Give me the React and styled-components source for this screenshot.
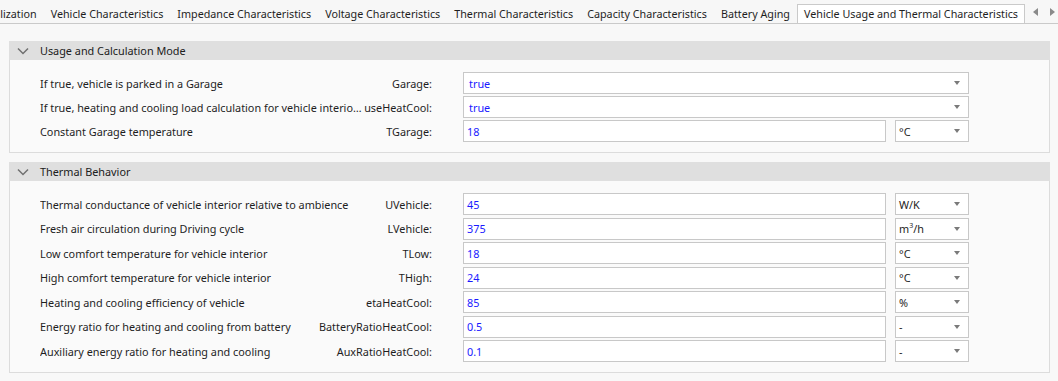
import React from 'react'
import styled, { createGlobalStyle } from 'styled-components'

const GlobalStyle = createGlobalStyle`
  body {
    margin: 0;
    background: #f8f8f8;
    font-family: 'Noto Sans', 'Open Sans', sans-serif;
    font-size: 10.85px;
    color: #1e1e1e;
  }
`

const Page = styled.div`
  width: 1058px;
  height: 381px;
  overflow: hidden;
  background: #f8f8f8;
`

const TabStrip = styled.div`
  display: flex;
  height: 24px;
  box-sizing: border-box;
  border-bottom: 1px solid #cacaca;
  background: #f7f7f7;
`

const TabList = styled.div`
  flex: 1;
  min-width: 0;
  display: flex;
  justify-content: flex-end;
  align-items: flex-end;
  overflow: hidden;
`

const Tab = styled.div`
  flex: none;
  height: 19px;
  box-sizing: border-box;
  padding: 0 7px;
  display: flex;
  align-items: center;
  white-space: nowrap;
  font-size: 10.75px;
  color: #1e1e1e;
  ${p =>
    p.$active &&
    `
    background: #ffffff;
    border: 1px solid #cacaca;
    border-bottom: none;
    margin-bottom: -1px;
    height: 20px;
    padding: 0 6px 1px;
  `}
`

const ScrollButtons = styled.div`
  flex: none;
  width: 33px;
  display: flex;
  align-items: center;
  justify-content: space-between;
  padding: 0 3px 0 8px;
  box-sizing: border-box;
`

const Arrow = styled.span`
  width: 0;
  height: 0;
  border-top: 4.5px solid transparent;
  border-bottom: 4.5px solid transparent;
  ${p =>
    p.$dir === 'left'
      ? 'border-right: 5px solid #8a8a8a;'
      : 'border-left: 5px solid #8a8a8a;'}
`

const Body = styled.div`
  padding: 17px 8px 0 9px;
  display: flex;
  flex-direction: column;
  gap: 9px;
`

const Section = styled.section`
  display: flex;
  flex-direction: column;
`

const SectionHeader = styled.div`
  height: 19px;
  background: #dfdfdf;
  display: flex;
  align-items: center;
  gap: 11px;
  padding-left: 8px;
  color: #202020;
`

const SectionContent = styled.div`
  background: #fafafa;
  border: 1px solid #dcdcdc;
  border-top: none;
  padding: 12px 0 10px 30px;
  display: flex;
  flex-direction: column;
  gap: ${p => p.$gap};
`

const Row = styled.div`
  display: flex;
  align-items: center;
  height: 22px;
`

const LeftCell = styled.div`
  width: 392px;
  display: flex;
  align-items: center;
  margin-right: 31px;
  flex: none;
`

const Description = styled.span`
  flex: 1;
  min-width: 0;
  white-space: nowrap;
  overflow: hidden;
  text-overflow: ellipsis;
`

const ParamLabel = styled.span`
  flex: none;
  text-align: right;
`

const Field = styled.div`
  width: ${p => p.$width}px;
  height: 22px;
  box-sizing: border-box;
  border: 1px solid #c8c8c8;
  background: #ffffff;
  display: flex;
  align-items: center;
  padding-left: ${p => p.$pad}px;
  padding-right: 8px;
  color: ${p => (p.$value ? '#1a1aff' : '#1e1e1e')};
  margin-right: ${p => p.$gapRight || 0}px;
`

const FieldText = styled.span`
  flex: 1;
  white-space: nowrap;
`

const Sup = styled.sup`
  font-size: 7px;
`

const DropArrow = styled.span`
  width: 0;
  height: 0;
  border-left: 3.5px solid transparent;
  border-right: 3.5px solid transparent;
  border-top: 4px solid #7a7a7a;
`

const Chevron = () => (
  <svg width="12" height="8" viewBox="0 0 12 8">
    <polyline points="1,1.5 6,6.5 11,1.5" fill="none" stroke="#707070" strokeWidth="1.5" />
  </svg>
)

const tabs = [
  'Initialization',
  'Vehicle Characteristics',
  'Impedance Characteristics',
  'Voltage Characteristics',
  'Thermal Characteristics',
  'Capacity Characteristics',
  'Battery Aging',
]

const usageRows = [
  { desc: 'If true, vehicle is parked in a Garage', label: 'Garage:', value: 'true', select: true },
  {
    desc: 'If true, heating and cooling load calculation for vehicle interior is used',
    label: 'useHeatCool:',
    value: 'true',
    select: true,
  },
  { desc: 'Constant Garage temperature', label: 'TGarage:', value: '18', unit: '°C' },
]

const thermalRows = [
  { desc: 'Thermal conductance of vehicle interior relative to ambience', label: 'UVehicle:', value: '45', unit: 'W/K' },
  { desc: 'Fresh air circulation during Driving cycle', label: 'LVehicle:', value: '375', unit: <>m<Sup>3</Sup>/h</> },
  { desc: 'Low comfort temperature for vehicle interior', label: 'TLow:', value: '18', unit: '°C' },
  { desc: 'High comfort temperature for vehicle interior', label: 'THigh:', value: '24', unit: '°C' },
  { desc: 'Heating and cooling efficiency of vehicle', label: 'etaHeatCool:', value: '85', unit: '%' },
  { desc: 'Energy ratio for heating and cooling from battery', label: 'BatteryRatioHeatCool:', value: '0.5', unit: '-' },
  { desc: 'Auxiliary energy ratio for heating and cooling', label: 'AuxRatioHeatCool:', value: '0.1', unit: '-' },
]

const ParamRow = ({ row }) => (
  <Row>
    <LeftCell>
      <Description>{row.desc}</Description>
      <ParamLabel>{row.label}</ParamLabel>
    </LeftCell>
    {row.select ? (
      <Field $width={506} $pad={5} $value>
        <FieldText>{row.value}</FieldText>
        <DropArrow />
      </Field>
    ) : (
      <>
        <Field $width={423} $pad={3} $value $gapRight={9}>
          <FieldText>{row.value}</FieldText>
        </Field>
        <Field $width={74} $pad={3}>
          <FieldText>{row.unit}</FieldText>
          <DropArrow />
        </Field>
      </>
    )}
  </Row>
)

export default function App() {
  return (
    <Page>
      <GlobalStyle />
      <TabStrip>
        <TabList>
          {tabs.map(t => (
            <Tab key={t}>{t}</Tab>
          ))}
          <Tab $active>Vehicle Usage and Thermal Characteristics</Tab>
        </TabList>
        <ScrollButtons>
          <Arrow $dir="left" />
          <Arrow $dir="right" />
        </ScrollButtons>
      </TabStrip>
      <Body>
        <Section>
          <SectionHeader>
            <Chevron />
            Usage and Calculation Mode
          </SectionHeader>
          <SectionContent $gap="2px">
            {usageRows.map(r => (
              <ParamRow key={r.label} row={r} />
            ))}
          </SectionContent>
        </Section>
        <Section>
          <SectionHeader>
            <Chevron />
            Thermal Behavior
          </SectionHeader>
          <SectionContent $gap="2.5px">
            {thermalRows.map(r => (
              <ParamRow key={r.label} row={r} />
            ))}
          </SectionContent>
        </Section>
      </Body>
    </Page>
  )
}
